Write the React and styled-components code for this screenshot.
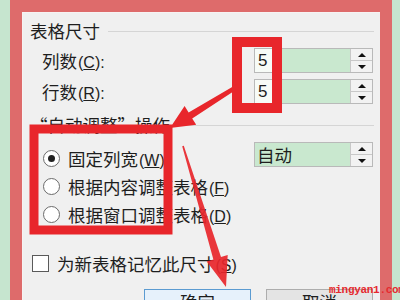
import React from "react";
import styled, { createGlobalStyle } from "styled-components";

const Global = createGlobalStyle`
  html, body { margin: 0; padding: 0; width: 400px; height: 300px; overflow: hidden; background: #c8e6d1; }
  * { box-sizing: border-box; }
`;

const Screen = styled.div`
  position: relative;
  width: 400px;
  height: 300px;
  display: flex;
  overflow: hidden;
  background: #c8e6d1;
  font-family: "Noto Sans CJK SC", "Liberation Sans", sans-serif;
  color: #1e1e1e;
`;

const Edge = styled.div`
  flex: 0 0 ${(p) => p.$w}px;
  background: #c6e5cf;
`;

const Frame = styled.div`
  flex: 0 0 382px;
  background: #de6b6b;
  padding: 12px 12px 0 12px;
  display: flex;
`;

const Dialog = styled.div`
  flex: 1;
  background: #f0f0f0;
  border-top: 1px solid #f7f3f3;
  border-left: 1px solid #f7f3f3;
  padding: 9px 7px 0 7px;
  display: flex;
  flex-direction: column;
  font-size: 17.5px;
`;

const GroupHeader = styled.div`
  display: flex;
  align-items: center;
  gap: 8px;
  height: 18px;
  line-height: 18px;
  margin-top: ${(p) => p.$top || 0}px;
  white-space: nowrap;
`;

const Rule = styled.div`
  flex: 1;
  height: 1px;
  background: #d5d5d5;
  margin-right: -1px;
`;

const Latin = styled.span`
  font-family: "Liberation Sans", sans-serif;
  font-size: 16px;
  margin-left: 1px;
`;

const FieldRow = styled.div`
  display: flex;
  align-items: center;
  height: 25px;
  margin-top: ${(p) => p.$top}px;
  padding-left: 12px;
`;

const FieldLabel = styled.span`
  flex: 1;
  white-space: nowrap;
`;

const SpinBox = styled.div`
  width: 119px;
  height: 25px;
  display: flex;
  border: 1px solid #b9b9b9;
  background: #ffffff;
  align-self: ${(p) => (p.$top ? "flex-start" : "center")};
  margin-top: ${(p) => p.$top || 0}px;
`;

const SpinValue = styled.div`
  width: 20px;
  padding-left: 3px;
  background: #f7fbf7;
  font-family: "Liberation Sans", sans-serif;
  font-size: 17px;
  line-height: 23px;
`;

const SpinFill = styled.div`
  flex: 1;
  background: #c9e8cf;
  padding-left: 2px;
  line-height: 23px;
`;

const SpinButtons = styled.div`
  width: 22px;
  display: flex;
  flex-direction: column;
  border-left: 1px solid #c8c8c8;
  background: #f2f2f2;
`;

const SpinHalf = styled.div`
  flex: 1;
  display: flex;
  align-items: center;
  justify-content: center;
  border-top: ${(p) => (p.$down ? "1px solid #c8c8c8" : "none")};
  &::before {
    content: "";
    width: 0;
    height: 0;
    border-left: 4px solid transparent;
    border-right: 4px solid transparent;
    ${(p) =>
      p.$down ? "border-top: 4px solid #111;" : "border-bottom: 4px solid #111;"}
  }
`;

const OptionsArea = styled.div`
  display: flex;
  margin-top: 10px;
  padding-left: 13px;
`;

const RadioList = styled.div`
  flex: 1;
  display: flex;
  flex-direction: column;
`;

const RadioRow = styled.div`
  display: flex;
  align-items: center;
  gap: 8px;
  height: 28px;
  white-space: nowrap;
`;

const RadioCircle = styled.span`
  flex: 0 0 17px;
  width: 17px;
  height: 17px;
  border-radius: 50%;
  border: 1px solid #6b6b6b;
  background: #fff;
  display: flex;
  align-items: center;
  justify-content: center;
  &::after {
    content: "";
    width: 7px;
    height: 7px;
    border-radius: 50%;
    background: ${(p) => (p.$on ? "#222" : "transparent")};
  }
`;

const CheckRow = styled.div`
  display: flex;
  align-items: center;
  gap: 8px;
  height: 20px;
  margin-top: 25px;
  padding-left: 2px;
  white-space: nowrap;
`;

const CheckBox = styled.span`
  flex: 0 0 17px;
  width: 17px;
  height: 17px;
  border: 1px solid #5a5a5a;
  background: #fff;
`;

const Buttons = styled.div`
  display: flex;
  justify-content: flex-end;
  gap: 15px;
  margin-top: 16px;
`;

const Button = styled.div`
  width: 107px;
  height: 26px;
  border: 1px solid ${(p) => (p.$primary ? "#5b9bd1" : "#adadad")};
  background: ${(p) => (p.$primary ? "#e6f1fb" : "#e4e4e4")};
  text-align: center;
  line-height: 24px;
`;

const Overlay = styled.svg`
  position: absolute;
  left: 0;
  top: 0;
  pointer-events: none;
`;

const Watermark = styled.div`
  position: absolute;
  left: 329px;
  top: 284px;
  font-family: "Liberation Mono", monospace;
  font-size: 11px;
  font-weight: bold;
  color: #e52a2f;
  white-space: nowrap;
  letter-spacing: -0.3px;
`;

function Spin({ value, text, top }) {
  return (
    <SpinBox $top={top}>
      {value && <SpinValue>{value}</SpinValue>}
      <SpinFill>{text}</SpinFill>
      <SpinButtons>
        <SpinHalf />
        <SpinHalf $down />
      </SpinButtons>
    </SpinBox>
  );
}

function Key({ k, colon }) {
  return (
    <Latin>
      (<u>{k}</u>){colon ? ":" : ""}
    </Latin>
  );
}

const RED = "#e8262b";

export default function App() {
  return (
    <>
      <Global />
      <Screen>
        <Edge $w={10} />
        <Frame>
          <Dialog>
            <GroupHeader>
              表格尺寸
              <Rule />
            </GroupHeader>
            <FieldRow $top={8}>
              <FieldLabel>
                列数<Key k="C" colon />
              </FieldLabel>
              <Spin value="5" />
            </FieldRow>
            <FieldRow $top={6}>
              <FieldLabel>
                行数<Key k="R" colon />
              </FieldLabel>
              <Spin value="5" />
            </FieldRow>
            <GroupHeader $top={12}>
              “自动调整”操作
              <Rule />
            </GroupHeader>
            <OptionsArea>
              <RadioList>
                <RadioRow>
                  <RadioCircle $on />
                  <span>
                    固定列宽<Key k="W" />
                  </span>
                </RadioRow>
                <RadioRow>
                  <RadioCircle />
                  <span>
                    根据内容调整表格<Key k="F" />
                  </span>
                </RadioRow>
                <RadioRow>
                  <RadioCircle />
                  <span>
                    根据窗口调整表格<Key k="D" />
                  </span>
                </RadioRow>
              </RadioList>
              <Spin text="自动" top={-2} />
            </OptionsArea>
            <CheckRow>
              <CheckBox />
              <span>
                为新表格记忆此尺寸<Key k="S" />
              </span>
            </CheckRow>
            <Buttons>
              <Button $primary>确定</Button>
              <Button>取消</Button>
            </Buttons>
          </Dialog>
        </Frame>
        <Edge $w={8} />
        <Overlay width="400" height="300" viewBox="0 0 400 300">
          <rect x="237" y="42" width="40" height="66" fill="none" stroke={RED} strokeWidth="10" />
          <rect x="34" y="129" width="134" height="101" fill="none" stroke={RED} strokeWidth="9" />
          <polygon
            fill={RED}
            points="239.1,87.7 192.2,118.4 196.2,124.8 170,128 184.6,106 188.6,112.4 236.9,84.3"
          />
          <polygon
            fill={RED}
            opacity="0.92"
            points="182.2,146.2 213.4,259.5 206.7,261.5 226,287 227.7,255.1 221,257.1 183.8,145.8"
          />
        </Overlay>
        <Watermark>mingyan1.com</Watermark>
      </Screen>
    </>
  );
}
